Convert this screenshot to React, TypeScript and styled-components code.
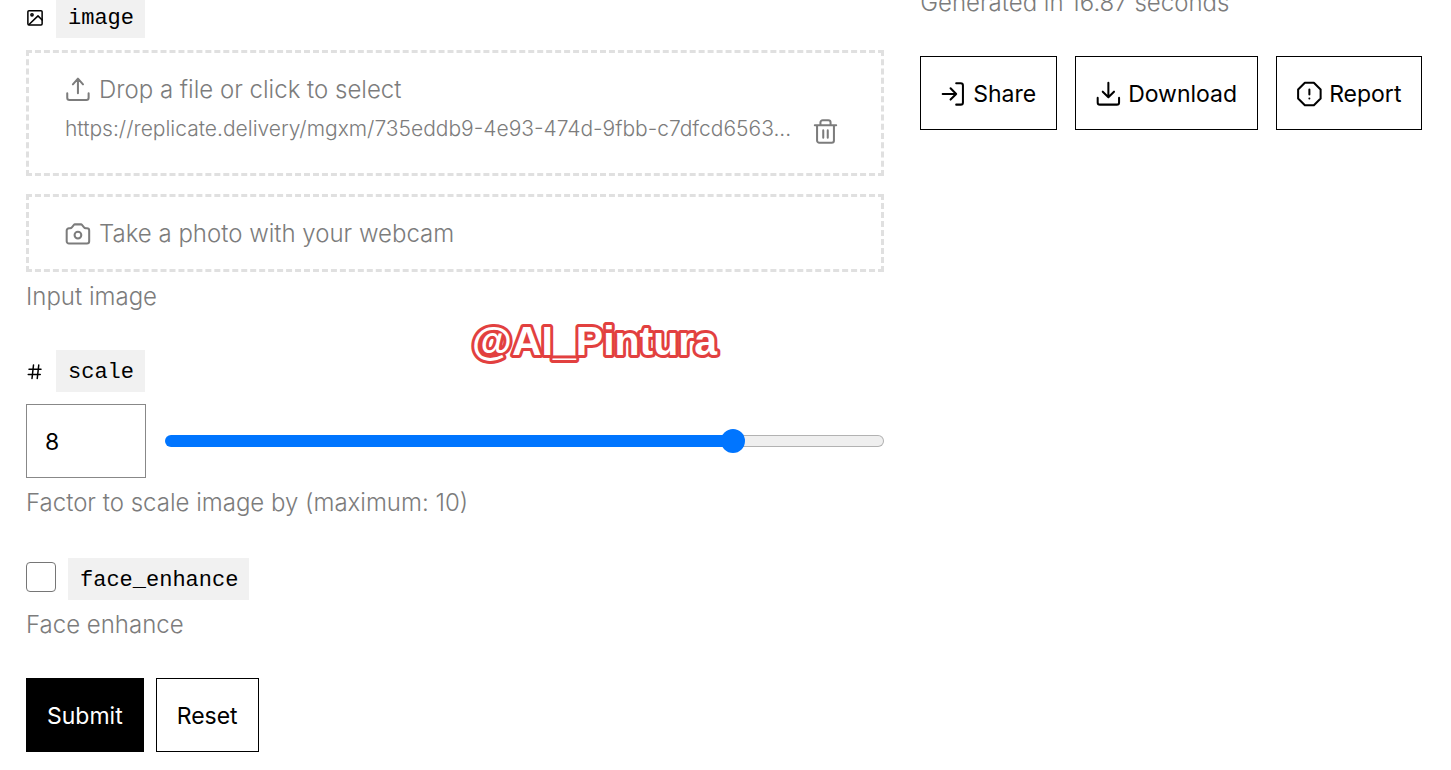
import React, { useState } from "react";
import styled, { createGlobalStyle, css } from "styled-components";

const sans = `Inter, "Liberation Sans", sans-serif`;
const mono = `"Liberation Mono", monospace`;

const GlobalStyle = createGlobalStyle`
  *, *::before, *::after { box-sizing: border-box; }
  body {
    margin: 0;
    background: #fff;
    color: #000;
    font: 300 24px/36px ${sans};
    overflow-x: hidden;
  }
`;

const Page = styled.main`
  display: grid;
  grid-template-columns: minmax(0, 17fr) minmax(0, 10fr);
  column-gap: 36px;
  margin-top: -16px;
  padding: 0 26px 18px;
`;

const Form = styled.form`
  position: relative;
  display: flex;
  flex-direction: column;
  gap: 36px;
  padding-top: 12px;
`;

const Field = styled.div`
  display: flex;
  flex-direction: column;
`;

const LabelRow = styled.div`
  display: flex;
  align-items: center;
  gap: 12px;
  margin-bottom: 12px;
`;

const CheckRow = styled.div`
  display: flex;
  align-items: flex-start;
  gap: 12px;
  padding-top: 2px;
`;

const Chip = styled.label`
  padding: 3px 11px 0 12px;
  background: #f1f1f1;
  font: 400 22px/39px ${mono};
`;

const Help = styled.p`
  margin: 8px 0 0;
  color: #7c7c7c;
  line-height: 34px;
`;

const Zone = styled.div<{ $spaced?: boolean }>`
  padding: 19px 36px 17px;
  border: 3px dashed #e0e0e0;
  margin-top: ${(p) => (p.$spaced ? 18 : 0)}px;
`;

const PlainButton = styled.button`
  display: flex;
  align-items: center;
  gap: 7px;
  padding: 0;
  border: 0;
  background: none;
  color: #7c7c7c;
  font: 300 24px/36px ${sans};
  cursor: pointer;
`;

const FileRow = styled.div`
  display: flex;
  justify-content: space-between;
  height: 48px;
`;

const FileName = styled.span`
  min-width: 0;
  overflow: hidden;
  white-space: nowrap;
  color: #7c7c7c;
  font-size: 21px;
  line-height: 42px;
`;

const DeleteButton = styled(PlainButton)`
  height: 46px;
  margin-right: 6px;
`;

const ScaleRow = styled.div`
  display: flex;
  align-items: center;
  gap: 19px;
`;

const NumberBox = styled.input`
  width: 120px;
  height: 74px;
  padding: 2px 18px 0;
  border: 1px solid #888;
  border-radius: 0;
  background: #fff;
  color: #000;
  font: 400 23px/36px ${sans};
  appearance: textfield;
  &::-webkit-inner-spin-button { appearance: none; margin: 0; }
`;

const trackStyle = css`
  height: 12px;
  border: 1px solid transparent;
  border-radius: 6px;
  background:
    linear-gradient(to right, #0075ff var(--fill), transparent var(--fill)) border-box,
    linear-gradient(#efefef, #efefef) padding-box,
    linear-gradient(#b2b2b2, #b2b2b2) border-box;
`;

const Slider = styled.input`
  flex: 1;
  min-width: 0;
  height: 24px;
  margin: 0;
  background: none;
  appearance: none;
  &::-webkit-slider-runnable-track { ${trackStyle} }
  &::-webkit-slider-thumb {
    appearance: none;
    width: 24px;
    height: 24px;
    margin-top: -7px;
    border-radius: 50%;
    background: #0075ff;
  }
`;

const CheckBox = styled.input`
  appearance: none;
  width: 30px;
  height: 30px;
  margin: 4px 0 0;
  border: 1px solid #767676;
  border-radius: 4px;
  background: #fff;
  &:checked { background: #0075ff; border-color: #0075ff; }
`;

const Actions = styled.div<{ $gap: number }>`
  display: flex;
  gap: ${(p) => p.$gap}px;
`;

const Button = styled.button<{ $primary?: boolean }>`
  display: flex;
  align-items: center;
  gap: 5px;
  padding: 19px 20px 17px;
  border: 1px solid #000;
  background: ${(p) => (p.$primary ? "#000" : "#fff")};
  color: ${(p) => (p.$primary ? "#fff" : "#000")};
  font: 400 23px/36px ${sans};
  white-space: nowrap;
  cursor: pointer;
`;

const Timing = styled.p`
  margin: 0;
  padding: 2px 0 36px;
  color: #7c7c7c;
  line-height: 34px;
`;

const Watermark = styled.svg`
  position: absolute;
  top: 327px;
  left: 440px;
  width: 270px;
  height: 60px;
  pointer-events: none;
  text {
    font: 700 41px "Liberation Sans", sans-serif;
    fill: #fff;
    stroke: #e2403f;
    stroke-width: 6px;
    stroke-linejoin: round;
    paint-order: stroke fill;
  }
`;

const Svg = styled.svg`
  display: block;
  flex: none;
  fill: none;
  stroke: currentColor;
  stroke-width: 1.8;
  stroke-linecap: round;
  stroke-linejoin: round;
`;

function Icon({ size = 27, children }: { size?: number; children: React.ReactNode }) {
  return (
    <Svg width={size} height={size} viewBox="0 0 24 24" aria-hidden="true">
      {children}
    </Svg>
  );
}

const ImageIcon = () => (
  <Icon size={18}>
    <g strokeWidth="2">
      <rect x="2.5" y="3.5" width="19" height="19" rx="1.5" />
      <circle cx="8" cy="9" r="1.5" />
      <path d="M4 22L16 10.5l5.5 5.5" />
    </g>
  </Icon>
);

const HashIcon = () => (
  <Icon size={18}>
    <path strokeWidth="2" d="M10 4L8 22M17 4L15 22M4 9.500h16M3 16.500h16" />
  </Icon>
);

const UploadIcon = () => (
  <Icon>
    <path d="M2 14.500v4a2 2 0 0 0 2 2h15a2 2 0 0 0 2-2v-4M11.500 14.500V1.500M7 6.500l4.500-5 4.500 5" />
  </Icon>
);

const CameraIcon = () => (
  <Icon>
    <path d="M1.500 18V8.500a2 2 0 0 1 2-2H4.500a2 2 0 0 0 1.600-.8l2-2.400A.8.8 0 0 1 8.700 3h5.600a.8.8 0 0 1 .6.300l2 2.400a2 2 0 0 0 1.600.8h1a2 2 0 0 1 2 2V18a2 2 0 0 1-2 2h-16a2 2 0 0 1-2-2z" />
    <circle cx="11.500" cy="12.500" r="3" />
  </Icon>
);

const TrashIcon = () => (
  <Icon>
    <path d="M19.500 7v13a2 2 0 0 1-2 2h-11a2 2 0 0 1-2-2V7M2.500 6.500h19M7.500 6V4a2 2 0 0 1 2-2h5a2 2 0 0 1 2 2v2M10 11v6.500M14 11v6.500" />
  </Icon>
);

const ShareIcon = () => (
  <Icon>
    <path d="M1.500 11.500H13.500M8.500 6.500l5 5-5 5M13.500 2h4a2 2 0 0 1 2 2v15a2 2 0 0 1-2 2h-4" />
  </Icon>
);

const DownloadIcon = () => (
  <Icon>
    <path d="M1.500 15v4a2 2 0 0 0 2 2h15a2 2 0 0 0 2-2v-4M11 1.500v13M6 9.500l5 5 5-5" />
  </Icon>
);

const ReportIcon = () => (
  <Icon>
    <path d="M7 1.500h8l6 6v8l-6 6H7l-6-6v-8zM11 7.500v4.500M11 15.500v.1" />
  </Icon>
);

export default function App() {
  const [scale, setScale] = useState(8);
  const fill = `calc(12px + (100% - 24px) * ${scale / 10})`;
  const change = (e: React.ChangeEvent<HTMLInputElement>) => setScale(Number(e.target.value));

  return (
    <>
      <GlobalStyle />
      <Page>
        <Form onSubmit={(e) => e.preventDefault()} onReset={() => setScale(8)}>
          <Field>
            <LabelRow>
              <ImageIcon />
              <Chip htmlFor="image">image</Chip>
            </LabelRow>
            <Zone>
              <PlainButton type="button" id="image">
                <UploadIcon />
                Drop a file or click to select
              </PlainButton>
              <FileRow>
                <FileName>https://replicate.delivery/mgxm/735eddb9-4e93-474d-9fbb-c7dfcd6563...</FileName>
                <DeleteButton type="button" aria-label="Remove file">
                  <TrashIcon />
                </DeleteButton>
              </FileRow>
            </Zone>
            <Zone $spaced>
              <PlainButton type="button">
                <CameraIcon />
                Take a photo with your webcam
              </PlainButton>
            </Zone>
            <Help>Input image</Help>
          </Field>

          <Field>
            <LabelRow>
              <HashIcon />
              <Chip htmlFor="scale">scale</Chip>
            </LabelRow>
            <ScaleRow>
              <NumberBox id="scale" type="number" min={0} max={10} value={scale} onChange={change} />
              <Slider
                type="range"
                aria-label="scale"
                min={0}
                max={10}
                step="any"
                value={scale}
                onChange={change}
                style={{ "--fill": fill } as React.CSSProperties}
              />
            </ScaleRow>
            <Help>Factor to scale image by (maximum: 10)</Help>
          </Field>

          <Field>
            <CheckRow>
              <CheckBox id="face_enhance" type="checkbox" />
              <Chip htmlFor="face_enhance">face_enhance</Chip>
            </CheckRow>
            <Help>Face enhance</Help>
          </Field>

          <Actions $gap={12}>
            <Button type="submit" $primary>Submit</Button>
            <Button type="reset">Reset</Button>
          </Actions>

          <Watermark>
            <text x="6" y="44">@AI_Pintura</text>
          </Watermark>
        </Form>

        <section>
          <Timing>Generated in 16.87 seconds</Timing>
          <Actions $gap={18}>
            <Button type="button"><ShareIcon />Share</Button>
            <Button type="button"><DownloadIcon />Download</Button>
            <Button type="button"><ReportIcon />Report</Button>
          </Actions>
        </section>
      </Page>
    </>
  );
}
